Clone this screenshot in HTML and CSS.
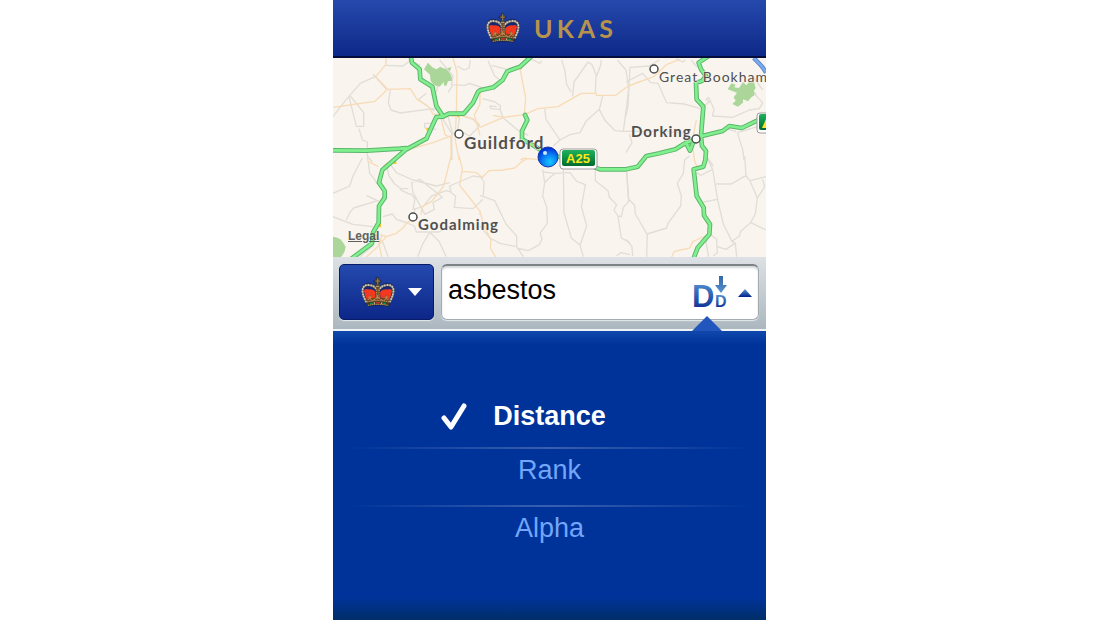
FILE: index.html
```html
<!DOCTYPE html>
<html lang="en">
<head>
<meta charset="utf-8">
<meta name="viewport" content="width=device-width, initial-scale=1">
<title>UKAS</title>
<link rel="stylesheet" href="styles.css">
</head>
<body>
<svg class="defs" aria-hidden="true">
  <defs>
    <symbol id="crown" viewBox="0 0 104 92">
      <path d="M13 80 2 38Q0 22 18 18 36 15 44 29L45 17H38V9H45V1H55V9H62V17H55L57 29Q66 15 85 18 104 22 102 38L91 80 84 92Q52 86 20 92Z" fill="#11205f" opacity=".65"/>
      <path d="M9 43Q10 34 24 38 40 37 45 48L42 74Q28 73 18 77Z" fill="#f4381f"/>
      <path d="M95 43Q94 34 80 38 64 37 58 48L61 74Q76 73 86 77Z" fill="#f4381f"/>
      <path d="M16 76Q1 49 6 34 11 23 25 25 43 26 49 42M88 76Q103 49 98 34 93 23 79 25 61 26 54 42" fill="none" stroke="#554c42" stroke-width="8"/>
      <path d="M16 76Q1 49 6 34 11 23 25 25 43 26 49 42M88 76Q103 49 98 34 93 23 79 25 61 26 54 42" fill="none" stroke="#c9c7bb" stroke-width="6" stroke-linecap="round" stroke-dasharray="1 7"/>
      <path d="M46 30H56L59 72H43Z" fill="#74512f"/>
      <path d="M48 32V72M55 32V72" stroke="#c09458" stroke-width="3" stroke-dasharray="4 3"/>
      <path d="M51 2V26M42 13H60" stroke="#3e3428" stroke-width="9"/>
      <path d="M51 4V25M44 13H58" stroke="#8b7655" stroke-width="4"/>
      <circle cx="51" cy="29" r="7" fill="#5b4a35"/>
      <path d="M46 29H56" stroke="#c1a36a" stroke-width="3"/>
      <path d="M18 78 16 64 23 68 28 54 34 66 41 62 44 69 51 52 59 69 64 62 70 66 77 54 82 68 89 64 86 78Q52 69 18 78Z" fill="#714424"/>
      <path d="M20 70 28 66 34 73 43 68 51 62 59 68 69 73 77 66 85 70M28 57V68M77 57V68M51 55V69M23 62H33M72 62H82M45 62H57" fill="none" stroke="#c98a48" stroke-width="3"/>
      <path d="M15 77Q52 67 89 77L84 89Q52 82 20 89Z" fill="#483821"/>
      <path d="M17 77Q52 68 87 77M21 87Q52 80 83 87" fill="none" stroke="#cfae6a" stroke-width="3" stroke-dasharray="4 2"/>
      <path d="M27 80 36 78V82L28 84ZM68 78 77 80 76 84 68 82Z" fill="#00964f"/>
      <path d="M46 77H58V81H46Z" fill="#d9331f"/>
      <path d="M39 78H43V82H39ZM61 78H65V82H61Z" fill="#d9d6c4"/>
    </symbol>
    <linearGradient id="ink" x1="0" y1="0" x2="0" y2="1">
      <stop offset="0" stop-color="#5a9bd6"/><stop offset="1" stop-color="#001f8c"/>
    </linearGradient>
    <linearGradient id="arrow" x1="0" y1="0" x2="0" y2="1">
      <stop offset="0" stop-color="#3467aa"/><stop offset="1" stop-color="#5792ce"/>
    </linearGradient>
    <linearGradient id="shield" x1="0" y1="0" x2="0" y2="1">
      <stop offset="0" stop-color="#1fb35c"/><stop offset="1" stop-color="#006b2e"/>
    </linearGradient>
    <radialGradient id="dot" cx=".6" cy=".75" r=".7">
      <stop offset="0" stop-color="#18c8ff"/><stop offset=".55" stop-color="#087df4"/><stop offset="1" stop-color="#0030d8"/>
    </radialGradient>
  </defs>
</svg>
<main class="app">
  <header class="brand">
    <svg class="crown" aria-hidden="true"><use href="#crown"/></svg>
    <h1 class="brand-name">UKAS</h1>
  </header>

  <section class="map" aria-label="Map">
    <svg class="map-canvas" viewBox="0 0 433 199" role="img" aria-label="Map of Guildford and Dorking">
      <g transform="scale(.33333)" fill="none" stroke-linejoin="round">
        <g class="park">
          <path d="M285 14 298 28 310 34 322 26 334 32 355 28 350 42 360 68 345 70 340 84 333 82 332 72 320 86 304 82 293 70 291 50 273 34Z"/>
          <path d="M1195 76 1208 80 1204 88 1218 90 1230 72 1240 82 1250 70 1262 68 1268 90 1262 100 1270 108 1255 118 1245 130 1230 124 1230 134 1215 146 1198 138 1208 128 1202 118 1212 104 1184 94Z"/>
          <path d="M0 536Q24 536 38 566 36 586 24 597H0Z"/>
        </g>
        <g class="lane">
          <g transform="translate(0 -6)">
            <path d="M120 54 160 100M126 62 82 82 40 130 0 182M52 120 92 170V211H70L48 122M78 218 88 252 103 258V300L118 318M172 102 166 140 174 162 202 171 300 158 320 162M255 132 280 112M258 132 304 166M262 28 230 14 210 30 156 28M320 12 360 60 355 86 396 88 410 82 450 96M412 12 408 36 394 42 372 30M360 86 345 110M314 90 310 110M318 170 356 232 357 312M345 180 360 236M380 180 374 220 410 240 440 210 420 190 392 180M275 216V202H300M275 216 310 220"/>
          </g>
          <g transform="translate(0 294)">
            <path d="M88 6 60 60 50 90 0 112M106 20 110 52 125 70 132 84M40 192 50 170 62 156 134 134M0 182 60 205 120 212M138 136 100 118M150 182 178 174 190 190 215 198 244 210 250 228 318 228 350 210M160 20 168 60 185 84 204 98H226M170 22 190 50 240 72 310 90 350 80M236 80 260 70 328 124 300 140 304 160 276 175 240 110ZM232 112 246 128 240 160 270 152 296 120 340 104 354 108 350 90 420 60 450 64M200 100 232 116M238 190 246 160M290 230 270 262 254 302M292 230 318 256 340 302M120 230 150 260 165 302M120 270 80 302M355 110 368 120 364 154 420 158 450 130"/>
          </g>
          <g transform="translate(441 -6)">
            <path d="M24 14 44 60 60 72M35 28 80 40M150 8 180 22 186 14M245 12 254 40 260 86 274 108M278 122 282 78 324 18 336 26 350 60 362 28 364 12M348 60 346 110M412 12 438 42 446 96 440 150 430 226 405 224 374 192 358 160 368 120M358 160 318 196 300 230 270 236 240 252 198 190 194 158M240 252 220 270M8 128 45 138 62 150 60 160 32 158 30 150 50 152M60 160 70 186 110 220 145 238M430 226H480"/>
          </g>
          <g transform="translate(441 294)">
            <path d="M0 60 12 78 10 118M0 118 44 134 78 204 110 240V272L60 262 30 246 0 210M110 272 130 302M110 276 145 284 178 266 186 248 180 232 202 202 200 152 188 120 194 80 188 40M190 48 225 52 204 70 194 80M225 52 270 50 290 76 316 86 304 152 320 210 300 268 274 246 252 170 250 36M300 268 310 302M346 40V74L384 104 388 124 410 146 402 162 414 180 424 182 430 154 446 136 440 50M414 180 424 246 450 260M410 300 422 290 450 296"/>
          </g>
          <g transform="translate(879 -6)">
            <path d="M0 78 50 52 74 80 96 82 122 140 174 144 224 158M100 12 70 30 12 34 6 150 0 178M150 8 170 18 178 12M196 12 214 34M230 152 250 138 240 130 248 124 264 160 260 180 320 184 370 162 400 158 410 140 384 112M380 60 410 102M0 226H120L190 234M334 230 400 210 404 190M334 230 350 280 354 312M330 226 300 218M10 234 18 260 0 290M240 300 262 330"/>
          </g>
          <g transform="translate(879 294)">
            <path d="M2 44 8 130 26 148 28 174 64 236 62 302M64 234 122 216 126 202 164 150 166 120 154 82 172 52 176 12 190 0M242 4 260 40 275 132 292 204 318 256 328 262 332 302M260 40 224 58 212 50M270 84H316L354 62 360 60 356 0M360 60 372 74 420 62M372 74 394 126 388 174 374 200 344 226 340 240 318 256M374 200 420 222M394 126 416 92 410 70M275 130 232 138M248 235 240 260 248 302M252 235 272 250 274 290 262 300M274 272 300 280 326 262M0 250 18 272 20 300"/>
          </g>
        </g>
        <g class="minor">
          <path d="M160 0 158 20 128 56 164 94 232 92 252 124 284 144 300 168 368 176M164 94 126 130 70 138 0 148M360 0 372 42 370 168 366 240 378 306M220 276 300 254 358 232M370 170 420 182 441 200M441 232 424 170 430 160 441 138 441 96M324 180 336 230 354 240 354 306M103 295 105 310 136 326M354 294 334 376 328 390 296 430 268 446 264 470M378 294 388 332 380 382 415 426 441 460 441 470M388 340 430 344 448 358 468 338 510 336 545 330 568 310 582 302 630 306M240 484 222 494 210 510 190 526 160 536 140 530M148 530 138 556 146 597M160 536 130 570 100 597M441 460 452 500 474 546 472 570 488 597"/>
          <path d="M561 32 578 120 574 170 615 152 675 146 745 106H790V112H848L886 84 962 56 1000 20 1040 4M574 170 512 178 441 208M512 178 480 172M562 306 570 301H582M1090 186 1078 248 1084 306 1094 332M1118 534 1080 550 1070 570 1024 580 1016 597"/>
        </g>
        <g class="junction"><path d="M280 210H288V218H280ZM372 172H378V178H372ZM182 310H190V318H182ZM152 320H158V326H152ZM137 490H144V508H137ZM560 28H566V34H560Z"/></g>
        <path d="M1262 0Q1290 26 1299 44" stroke="#527fc5" stroke-width="13"/>
        <path d="M1262 0Q1290 26 1299 44" stroke="#79a9ef" stroke-width="8"/>
        <g stroke-linecap="round">
          <path class="road-edge" d="M232-10 237 14 260 34 262 64 298 86 310 144 328 172M594-4 561 26 523 40 509 66 481 88 441 97 435 102 420 134 392 167H348L330 176 310 177 280 242 220 274 148 336 138 374 155 399V419L138 444 137 494 120 524 117 556 50 606M-10 277 100 278 200 272 220 270M576 171 583 186 567 219V244L590 256 640 286 786 328 801 334H879L914 326 940 294 979 286 1027 274 1059 254 1089 244 1107 234 1169 219 1189 204 1226 210 1280 184M1130-8 1097 14 1104 34 1119 54 1107 69 1089 74 1091 124 1111 146 1104 234 1107 264 1119 279 1117 306 1111 326 1082 334 1091 414 1112 449 1113 472 1131 499 1129 529 1094 569 1080 606M1059 254 1071 278 1080 254"/>
          <path class="road" d="M232-10 237 14 260 34 262 64 298 86 310 144 328 172M594-4 561 26 523 40 509 66 481 88 441 97 435 102 420 134 392 167H348L330 176 310 177 280 242 220 274 148 336 138 374 155 399V419L138 444 137 494 120 524 117 556 50 606M-10 277 100 278 200 272 220 270M576 171 583 186 567 219V244L590 256 640 286 786 328 801 334H879L914 326 940 294 979 286 1027 274 1059 254 1089 244 1107 234 1169 219 1189 204 1226 210 1280 184M1130-8 1097 14 1104 34 1119 54 1107 69 1089 74 1091 124 1111 146 1104 234 1107 264 1119 279 1117 306 1111 326 1082 334 1091 414 1112 449 1113 472 1131 499 1129 529 1094 569 1080 606M1059 254 1071 278 1080 254"/>
        </g>
      </g>
      <g class="town">
        <circle cx="126" cy="76" r="4"/><circle cx="80" cy="159" r="4"/><circle cx="321" cy="11" r="4"/><circle cx="363" cy="81" r="4"/>
      </g>
      <g class="label">
        <text class="label-large" x="131" y="91">Guildford</text>
        <text x="85" y="172">Godalming</text>
        <text x="298" y="79">Dorking</text>
        <text class="label-light" x="326" y="24">Great Bookham</text>
      </g>
      <rect x="227" y="91" width="37" height="20" rx="3" fill="#fff" stroke="#a39a9f"/>
      <rect x="229" y="92" width="33" height="16" rx="2" fill="url(#shield)"/>
      <text class="shield-text" x="245" y="105" text-anchor="middle">A25</text>
      <rect x="424" y="55" width="20" height="20" rx="3" fill="#fff" stroke="#a39a9f"/>
      <rect x="426" y="56" width="18" height="16" rx="2" fill="url(#shield)"/>
      <path d="M429 70 433 61V70Z" fill="#ffe81a"/>
      <circle cx="215" cy="99" r="10" fill="url(#dot)" stroke="#1737a8"/>
      <circle cx="212" cy="95" r="2" fill="#c5edff"/>
    </svg>
    <a class="legal" href="#legal">Legal</a>
  </section>

  <form class="toolbar">
    <button class="filter" type="button" aria-label="Choose scheme">
      <svg class="crown" aria-hidden="true"><use href="#crown"/></svg>
      <svg class="caret" viewBox="0 0 14 8" aria-hidden="true"><path d="M0 0H14L7 8Z" fill="#fff"/></svg>
    </button>
    <div class="search">
      <input class="search-input" type="text" value="asbestos" aria-label="Search">
      <button class="sort" type="button" aria-label="Sort order" aria-expanded="true">
        <svg class="sort-icon" viewBox="0 0 36 34" aria-hidden="true">
          <text class="sort-letter" x="0" y="31">D</text>
          <text class="sort-letter-small" x="23" y="31">D</text>
          <path d="M27 0H31V9H35L29 17 23 9H27Z" fill="url(#arrow)"/>
        </svg>
        <svg class="caret" viewBox="0 0 14 8" aria-hidden="true"><path d="M0 8 7 0 14 8Z" fill="url(#ink)"/></svg>
      </button>
    </div>
  </form>

  <section class="panel" aria-label="Sort by">
    <svg class="pointer" viewBox="0 0 30 15" aria-hidden="true"><path d="M0 15 15 0 30 15Z" fill="#2356bd"/></svg>
    <ul class="options">
      <li><button class="option option-selected" type="button" aria-pressed="true">
        <svg class="tick" viewBox="0 0 26 28" aria-hidden="true"><path d="M3 16 10 25 23 4" fill="none" stroke="#fff" stroke-width="5" stroke-linecap="round" stroke-linejoin="round"/></svg>Distance</button></li>
      <li><button class="option" type="button">Rank</button></li>
      <li><button class="option" type="button">Alpha</button></li>
    </ul>
  </section>
</main>
</body>
</html>
```
FILE: styles.css
```css
* { box-sizing: border-box; }

body {
  margin: 0;
  padding-right: 1px;
  background: #fff;
  font-family: "Liberation Sans", Arial, sans-serif;
}

button {
  margin: 0;
  border: 0;
  background: none;
  font: inherit;
  cursor: pointer;
}

.defs { position: absolute; width: 0; height: 0; }

.app {
  display: flex;
  flex-direction: column;
  width: 100%;
  max-width: 433px;
  min-height: 100vh;
  margin: 0 auto;
  overflow: hidden;
}

.brand {
  display: flex;
  align-items: center;
  justify-content: center;
  gap: 14px;
  padding: 12px 0 12px 4px;
  border-bottom: 2px solid #050d3c;
  background: linear-gradient(#2549ac, #0e2988);
}

.crown { width: 34px; height: 32px; flex: none; }

.brand-name {
  margin: 0;
  color: #b8934c;
  font: 700 25px/32px Lato, sans-serif;
  letter-spacing: 4px;
}

.map { position: relative; background: #f9f5ee; }
.map-canvas { display: block; width: 100%; height: auto; }
.park { fill: #abd69a; }
.lane { stroke: #e1ddd7; stroke-width: 4; }
.minor { stroke: #f8dbb7; stroke-width: 4; }
.junction { fill: #ffc81e; }
.road-edge { stroke: #5bb56b; stroke-width: 14; }
.road { stroke: #80ef8e; stroke-width: 8; }
.town { fill: #fff; stroke: #4b4b4b; stroke-width: 1.5; }

.label {
  fill: #505050;
  stroke: #f9f5ee;
  stroke-width: 1px;
  paint-order: stroke;
  font: 700 15px Lato, sans-serif;
  letter-spacing: 1px;
}
.label-large { font-size: 17px; }
.label-light { font-size: 14px; font-weight: 400; }

.shield-text { fill: #ffe81a; font: 700 13px "Liberation Sans", sans-serif; }

.legal {
  position: absolute;
  left: 15px;
  bottom: 13px;
  color: #606060;
  font-size: 12px;
  font-weight: 700;
  line-height: 16px;
}

.toolbar {
  display: flex;
  gap: 7px;
  padding: 7px 7px 9px 6px;
  border-bottom: 2px solid #eef2f4;
  background: linear-gradient(#dde1e5, #abb7bf);
}

.filter {
  display: flex;
  align-items: center;
  justify-content: center;
  gap: 13px;
  width: 95px;
  height: 56px;
  padding: 0 0 0 10px;
  border: 1px solid #071a66;
  border-radius: 5px;
  background: linear-gradient(#2449ae, #0c2788);
  box-shadow: 0 1px 1px #e4eaee;
}

.caret { width: 14px; height: 8px; flex: none; }

.search {
  display: flex;
  flex: 1;
  min-width: 0;
  height: 56px;
  border: 1px solid #a4abb0;
  border-top: 2px solid #7c8286;
  border-radius: 6px;
  background: #fff;
  box-shadow: inset 0 2px 2px #d5d8da, 0 1px 1px #e4eaee;
}

.search-input {
  flex: 1;
  min-width: 0;
  padding: 0 6px 4px;
  border: 0;
  outline: 0;
  background: none;
  color: #000;
  font: 27px "Liberation Sans", Arial, sans-serif;
}

.sort {
  display: flex;
  align-items: center;
  gap: 10px;
  padding: 0 6px;
}

.sort-icon { width: 36px; height: 34px; }
.sort-letter, .sort-letter-small { fill: url(#ink); font-family: "Liberation Sans", sans-serif; font-weight: 700; }
.sort-letter { font-size: 31px; }
.sort-letter-small { font-size: 16px; }

.panel {
  position: relative;
  flex: 1;
  padding: 60px 15px 54px;
  background:
    linear-gradient(#0f48ac, transparent 14px),
    linear-gradient(transparent calc(100% - 22px), #002e68),
    #003399;
}

.pointer {
  position: absolute;
  right: 44px;
  bottom: 100%;
  width: 30px;
  height: 15px;
}

.options { margin: 0; padding: 0; list-style: none; }
.options li + li {
  border-top: 2px solid;
  border-image: linear-gradient(90deg, transparent, #3960b0 50%, transparent) 1;
}

.option {
  display: flex;
  align-items: center;
  justify-content: center;
  width: 100%;
  height: 56px;
  padding: 0 0 14px;
  color: #73a5fa;
  font-size: 27px;
  line-height: 32px;
}

.option-selected {
  gap: 26px;
  padding-right: 52px;
  padding-bottom: 6px;
  color: #fff;
  font-weight: 700;
}

.tick { width: 26px; height: 28px; flex: none; }
```
